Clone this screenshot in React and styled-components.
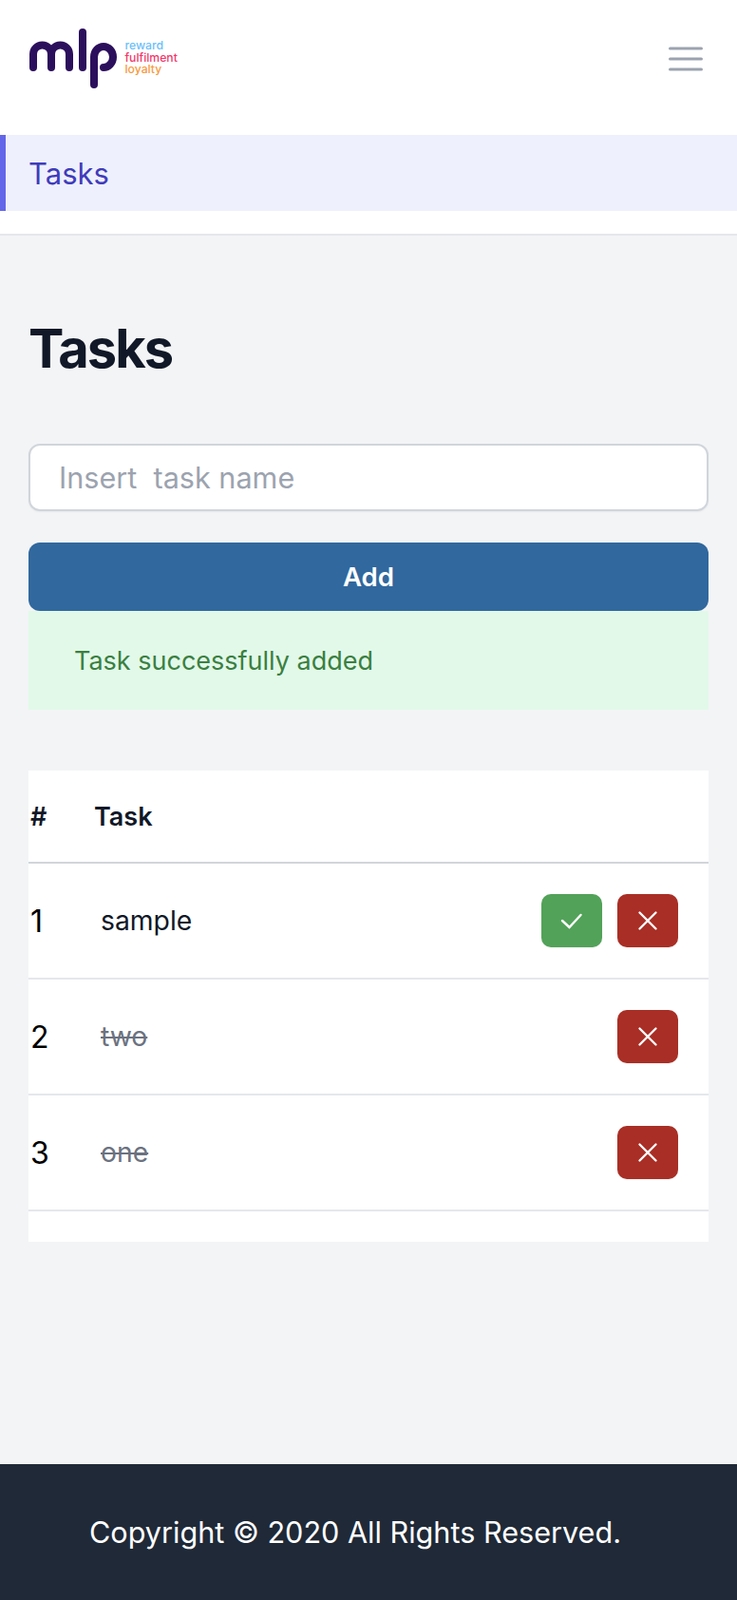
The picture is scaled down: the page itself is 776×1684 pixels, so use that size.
import React from 'react';
import styled, { createGlobalStyle } from 'styled-components';

const Global = createGlobalStyle`
  html, body { margin: 0; padding: 0; }
  body { background: #f3f4f6; font-family: Inter, "Liberation Sans", sans-serif; }
  * { box-sizing: border-box; }
`;

const Page = styled.div`
  min-height: 1684px;
  display: flex;
  flex-direction: column;
`;

const Top = styled.header`
  background: #fff;
  height: 248px;
  border-bottom: 2px solid #e5e7eb;
`;

const Bar = styled.div`
  height: 142px;
  padding: 29px 36px 0 30px;
  display: flex;
  align-items: flex-start;
  justify-content: space-between;
`;

const MenuIcon = styled.svg`
  margin-top: 20px;
`;

const NavItem = styled.a`
  display: flex;
  align-items: center;
  height: 80px;
  padding-left: 24px;
  border-left: 6px solid #6366e8;
  background: #eef0fd;
  color: #3f3cbb;
  font-size: 31px;
`;

const Main = styled.main`
  flex: 1;
  padding: 84px 30px 0;
`;

const Title = styled.h1`
  margin: 0 0 65px;
  color: #111827;
  font-size: 56px;
  line-height: 70px;
  font-weight: 700;
  letter-spacing: -2px;
`;

const NameInput = styled.input`
  display: block;
  width: 100%;
  height: 71px;
  padding: 0 30px;
  border: 2px solid #d1d5db;
  border-radius: 12px;
  background: #fff;
  box-shadow: 0 1px 2px rgba(0, 0, 0, 0.05);
  font: 30.6px Inter, sans-serif;
  &::placeholder { color: #9ca3af; opacity: 1; }
`;

const AddButton = styled.button`
  display: block;
  width: 100%;
  height: 72px;
  margin-top: 33px;
  border: 0;
  border-radius: 12px;
  background: #31689e;
  color: #fff;
  font: 600 27.6px Inter, sans-serif;
`;

const Alert = styled.div`
  height: 104px;
  padding-left: 48px;
  display: flex;
  align-items: center;
  background: #e2f9e9;
  color: #3b7f42;
  font-size: 27px;
`;

const Table = styled.table`
  width: 100%;
  margin-top: 64px;
  border-collapse: collapse;
  background: #fff;
  color: #111827;
`;

const Th = styled.th`
  height: 97px;
  padding: 0 0 0 2px;
  border-bottom: 2px solid #d1d5db;
  text-align: left;
  font-size: 27px;
  font-weight: 600;
  &:first-child { width: 67px; }
`;

const Row = styled.tr`
  height: 122px;
  border-bottom: 2px solid #e5e7eb;
`;

const Num = styled.td`
  padding: 0 0 0 2px;
  color: #000;
  font-size: 32px;
`;

const Name = styled.td`
  padding: 0 0 0 9px;
  font-size: 28.3px;
  ${(p) => p.$done && 'color: #6b7280; text-decoration: line-through;'}
`;

const Actions = styled.td`
  padding-right: 32px;
`;

const ActionWrap = styled.div`
  display: flex;
  justify-content: flex-end;
  gap: 16px;
`;

const IconButton = styled.button`
  width: 64px;
  height: 56px;
  padding: 0;
  border: 0;
  border-radius: 10px;
  display: flex;
  align-items: center;
  justify-content: center;
  background: ${(p) => p.$bg};
  box-shadow: 0 1px 2px rgba(0, 0, 0, 0.05);
`;

const Spacer = styled.div`
  height: 32px;
  background: #fff;
`;

const Footer = styled.footer`
  height: 143px;
  padding-left: 94px;
  display: flex;
  align-items: center;
  background: #1f2937;
  color: #fff;
  font-size: 30.6px;
`;

function Logo() {
  return (
    <svg width="165" height="84" viewBox="30 29 165 84">
      <g fill="none" stroke="#2c0f5c" strokeWidth="8" strokeLinecap="round">
        <path d="M35 71V57a9.500 9.500 0 0 1 19 0v14M54 57a9.500 9.500 0 0 1 19 0v14" />
        <path d="M87 34V71" />
        <path d="M99 89V60A10 11 0 1 1 109 71" />
      </g>
      <g fontFamily="Inter, sans-serif" fontSize="12.200" fontWeight="500">
        <text x="131.500" y="52" fill="#6cc0fa">reward</text>
        <text x="131.500" y="65" fill="#f0386b">fulfilment</text>
        <text x="131.500" y="77" fill="#f79a3e">loyalty</text>
      </g>
    </svg>
  );
}

function Menu() {
  return (
    <MenuIcon width="36" height="26" viewBox="0 0 36 26" fill="none" stroke="#9ca3af" strokeWidth="3" strokeLinecap="round">
      <path d="M1.500 2H34.500M1.500 13H34.500M1.500 24H34.500" />
    </MenuIcon>
  );
}

function Check() {
  return (
    <svg width="24" height="24" viewBox="0 0 24 24" fill="none" stroke="#fff" strokeWidth="2.400" strokeLinecap="round">
      <path d="M2 12L9.500 19L21.500 6" />
    </svg>
  );
}

function Cross() {
  return (
    <svg width="24" height="24" viewBox="0 0 24 24" fill="none" stroke="#fff" strokeWidth="2.400" strokeLinecap="round">
      <path d="M3.500 3.500L20.500 20.500M20.500 3.500L3.500 20.500" />
    </svg>
  );
}

const tasks = [
  { id: 1, name: 'sample', done: false },
  { id: 2, name: 'two', done: true },
  { id: 3, name: 'one', done: true },
];

export default function App() {
  return (
    <Page>
      <Global />
      <Top>
        <Bar>
          <Logo />
          <Menu />
        </Bar>
        <NavItem>Tasks</NavItem>
      </Top>
      <Main>
        <Title>Tasks</Title>
        <NameInput placeholder="Insert  task name" />
        <AddButton>Add</AddButton>
        <Alert>Task successfully added</Alert>
        <Table>
          <thead>
            <tr>
              <Th>#</Th>
              <Th>Task</Th>
              <Th />
            </tr>
          </thead>
          <tbody>
            {tasks.map((t) => (
              <Row key={t.id}>
                <Num>{t.id}</Num>
                <Name $done={t.done}>{t.name}</Name>
                <Actions>
                  <ActionWrap>
                    {!t.done && <IconButton $bg="#52a259"><Check /></IconButton>}
                    <IconButton $bg="#a92e25"><Cross /></IconButton>
                  </ActionWrap>
                </Actions>
              </Row>
            ))}
          </tbody>
        </Table>
        <Spacer />
      </Main>
      <Footer>Copyright © 2020 All Rights Reserved.</Footer>
    </Page>
  );
}
